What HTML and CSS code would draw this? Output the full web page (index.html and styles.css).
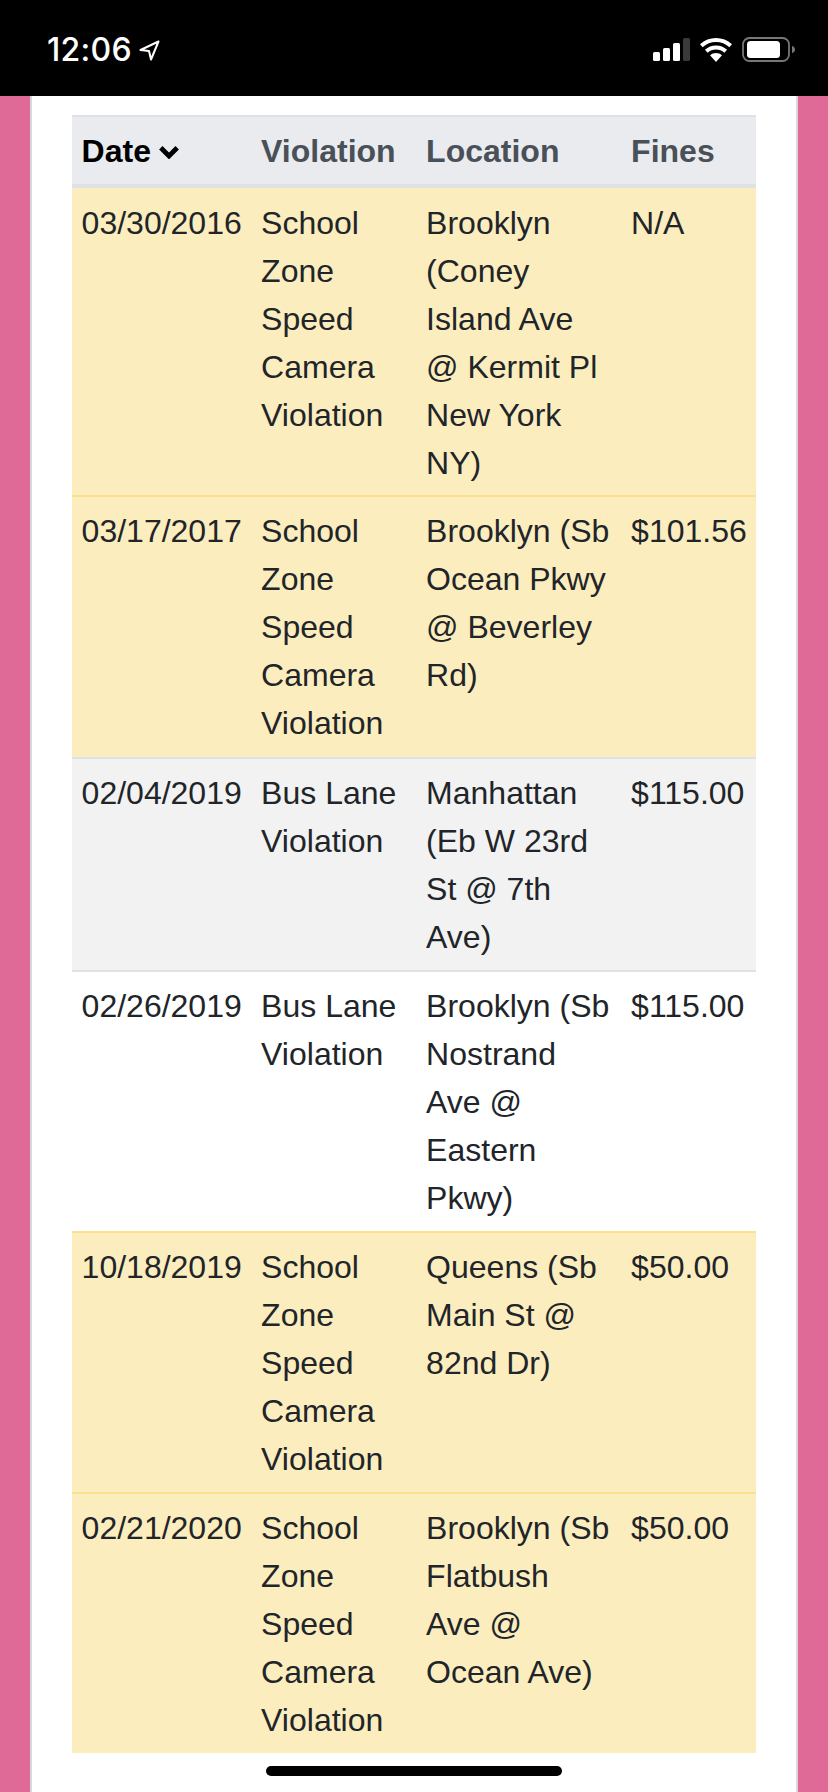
FILE: index.html
```html
<!DOCTYPE html>
<html lang="en">
<head>
<meta charset="utf-8">
<title>Violations</title>
<link rel="stylesheet" href="styles.css">
</head>
<body>
<header class="status-bar">
  <div class="status-left">
    <span class="clock">12:06</span>
    <svg class="loc-icon" viewBox="0 0 21 21"><path d="M19.500 1.500 1.500 10 10 11l2 8.500z" fill="none" stroke="#fff" stroke-width="2" stroke-linejoin="round"/></svg>
  </div>
  <div class="status-right">
    <svg class="signal" viewBox="0 0 37 23"><rect x="0" y="14" width="7" height="9" rx="1.500" fill="#fff"/><rect x="10" y="10" width="7" height="13" rx="1.500" fill="#fff"/><rect x="20" y="5" width="7" height="18" rx="1.500" fill="#fff"/><rect x="30" y="0" width="7" height="23" rx="1.500" fill="#3a3a3a"/></svg>
    <svg class="wifi" viewBox="0 0 32 24"><path d="M1.300 7.700A22 22 0 0 1 30.700 7.700M6.300 13.200A14.500 14.500 0 0 1 25.700 13.200" fill="none" stroke="#fff" stroke-width="4"/><path d="M16 24 10 17.300A9 9 0 0 1 22 17.300z" fill="#fff"/></svg>
    <svg class="battery" viewBox="0 0 53 25"><rect x="1" y="1" width="46" height="23" rx="6.500" fill="none" stroke="#777" stroke-width="1.800"/><rect x="5" y="4" width="33" height="17" rx="3.500" fill="#fff"/><path d="M50 9c2 .5 3 2 3 3.500S52 15.500 50 16z" fill="#777"/></svg>
  </div>
</header>
<main class="page">
  <div class="card">
    <table class="violations">
      <colgroup><col class="c-date"><col class="c-vio"><col class="c-loc"><col class="c-fine"></colgroup>
      <thead>
        <tr>
          <th class="sorted">Date <svg class="chev" viewBox="0 0 22 14"><path d="M2.800 2.800 11 11 19.200 2.800" fill="none" stroke="#000" stroke-width="4.800"/></svg></th>
          <th>Violation</th>
          <th>Location</th>
          <th>Fines</th>
        </tr>
      </thead>
      <tbody>
        <tr class="warn"><td>03/30/2016</td><td>School Zone Speed Camera Violation</td><td>Brooklyn (Coney Island Ave @ Kermit Pl New York NY)</td><td>N/A</td></tr>
        <tr class="warn"><td>03/17/2017</td><td>School Zone Speed Camera Violation</td><td>Brooklyn (Sb Ocean Pkwy @ Beverley Rd)</td><td>$101.56</td></tr>
        <tr class="muted"><td>02/04/2019</td><td>Bus Lane Violation</td><td>Manhattan (Eb W 23rd St @ 7th Ave)</td><td>$115.00</td></tr>
        <tr class="plain"><td>02/26/2019</td><td>Bus Lane Violation</td><td>Brooklyn (Sb Nostrand Ave @ Eastern Pkwy)</td><td>$115.00</td></tr>
        <tr class="warn"><td>10/18/2019</td><td>School Zone Speed Camera Violation</td><td>Queens (Sb Main St @ 82nd Dr)</td><td>$50.00</td></tr>
        <tr class="warn"><td>02/21/2020</td><td>School Zone Speed Camera Violation</td><td>Brooklyn (Sb Flatbush<br>Ave @<br>Ocean Ave)</td><td>$50.00</td></tr>
      </tbody>
    </table>
  </div>
</main>
<div class="home-indicator"></div>
</body>
</html>
```
FILE: styles.css
```css
* { box-sizing: border-box; }
html, body { margin: 0; padding: 0; }
body {
  width: 828px;
  height: 1792px;
  overflow: hidden;
  background: #df6a97;
  font-family: "Liberation Sans", Arial, sans-serif;
  color: #212529;
  display: flex;
  flex-direction: column;
  position: relative;
}
.status-bar {
  height: 96px;
  flex: none;
  background: #000;
  display: flex;
  justify-content: space-between;
  align-items: flex-start;
  padding: 32px 33px 0 47px;
  color: #fff;
}
.status-left { display: flex; align-items: center; gap: 7px; }
.clock { font: 500 32px/36px Inter, "Liberation Sans", sans-serif; letter-spacing: .3px; }
.loc-icon { width: 21px; height: 21px; }
.status-right { display: flex; align-items: center; gap: 10px; padding-top: 5px; }
.signal { width: 37px; height: 23px; }
.wifi { width: 32px; height: 24px; }
.battery { width: 53px; height: 25px; }
.page { flex: 1; padding: 0 30px; }
.card {
  height: 100%;
  background: #fff;
  border-left: 2px solid #d8d8dc;
  border-right: 2px solid #d8d8dc;
  padding: 19px 40px 0;
}
.violations {
  width: 684px;
  table-layout: fixed;
  border-collapse: separate;
  border-spacing: 0;
  font-size: 32px;
  line-height: 48px;
}
.c-date { width: 179.5px; }
.c-vio { width: 165px; }
.c-loc { width: 205px; }
.c-fine { width: 134.5px; }
th, td { padding: 9.6px; text-align: left; vertical-align: top; }
th {
  background: #e9ebef;
  color: #495057;
  font-weight: 700;
  border-top: 2px solid #dee2e6;
  border-bottom: 4px solid #dee2e6;
  white-space: nowrap;
}
th.sorted { color: #000; }
.chev { width: 22px; height: 14px; margin-left: -2px; display: inline-block; vertical-align: 3px; }
tbody tr td { border-top: 2px solid #dee2e6; }
tbody tr:first-child td { border-top: 0; padding-top: 10.6px; padding-bottom: 8.6px; }
.warn td { background: #fcedbe; border-top-color: #fbe08d; }
.muted td { background: #f2f2f2; padding-top: 10.4px; padding-bottom: 8.8px; }
.plain td { background: #fff; padding-top: 10.4px; padding-bottom: 8.8px; }
.home-indicator {
  position: absolute;
  left: 266px;
  top: 1766px;
  width: 296px;
  height: 10px;
  border-radius: 5px;
  background: #000;
}
```
